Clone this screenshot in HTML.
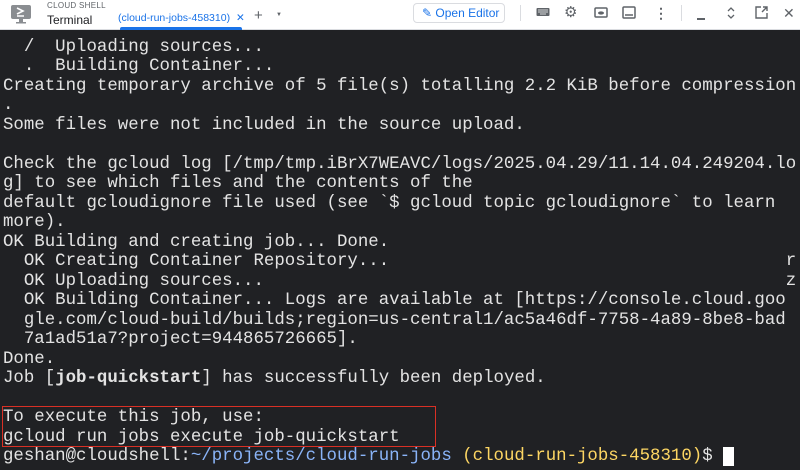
<!DOCTYPE html>
<html><head><meta charset="utf-8"><style>
*{margin:0;padding:0;box-sizing:border-box}
body{width:800px;height:470px;overflow:hidden;background:#202124;font-family:"Liberation Sans",sans-serif;position:relative}
#hdr{position:absolute;left:0;top:0;width:800px;height:30px;background:#fff;border-bottom:1px solid #dadce0}
.t{position:absolute;white-space:nowrap}
pre{position:absolute;left:3px;top:38px;font-family:"Liberation Mono",monospace;font-size:17.4px;line-height:19.48px;color:#e3e3e3;white-space:pre}
.b{color:#8ab4f8}.y{color:#fdd663}
#box{position:absolute;left:2px;top:406px;width:434px;height:41px;border:1.5px solid #d93025}
.ic{position:absolute;top:7px}
</style></head><body>
<div id="hdr">
 <svg class="ic" style="left:10px;top:4px" width="22" height="20" viewBox="0 0 22 20"><rect x="1" y="1" width="20" height="14" rx="2" fill="#8a8d91"/><rect x="9" y="15" width="4" height="3" fill="#8a8d91"/><rect x="6" y="18" width="10" height="1.5" fill="#8a8d91"/><path d="M7 4l6 3-6 3M7 12h7" stroke="#fff" stroke-width="1.6" fill="none"/></svg>
 <div class="t" style="left:47px;top:1px;font-size:8px;color:#5f6368;letter-spacing:.3px">CLOUD SHELL</div>
 <div class="t" style="left:47px;top:13px;font-size:12px;color:#202124">Terminal</div>
 <div class="t" style="left:118px;top:12px;font-size:10.5px;color:#1a73e8">(cloud-run-jobs-458310) <span style="margin-left:3px">✕</span></div>
 <div style="position:absolute;left:120px;top:27px;width:122px;height:3px;background:#1a73e8;border-radius:2px 2px 0 0"></div>
 <div class="t" style="left:254px;top:7px;font-size:15px;color:#5f6368">+</div>
 <div class="t" style="left:276px;top:12px;font-size:6px;color:#5f6368">▼</div>
 <div style="position:absolute;left:413px;top:3px;width:92px;height:20px;border:1px solid #dadce0;border-radius:4px"></div>
 <div class="t" style="left:422px;top:6px;font-size:12px;color:#1a73e8">✎ Open Editor</div>
 <div style="position:absolute;left:520px;top:5px;width:1px;height:16px;background:#dadce0"></div>
 <svg class="ic" style="left:536px" width="14" height="10"><rect x="0.5" y="1" width="13" height="8" rx="1" fill="#5f6368"/><path d="M2 3h10M2 5h10M4 7h6" stroke="#fff" stroke-width=".8"/></svg>
 <div class="t" style="left:564px;top:3px;font-size:15px;color:#5f6368">⚙</div>
 <svg class="ic" style="left:594px" width="14" height="11"><rect x="1" y="1" width="12" height="9" rx="1" stroke="#5f6368" stroke-width="1.5" fill="none"/><ellipse cx="7" cy="6" rx="3" ry="1.6" fill="#5f6368"/></svg>
 <svg class="ic" style="left:622px;top:6px" width="14" height="13"><rect x="1" y="1" width="12" height="11" rx="1" stroke="#5f6368" stroke-width="1.5" fill="none"/><path d="M3 9h8" stroke="#5f6368" stroke-width="1.5"/></svg>
 <div class="t" style="left:654px;top:5px;font-size:14px;color:#5f6368;font-weight:bold">⋮</div>
 <div style="position:absolute;left:681px;top:5px;width:1px;height:16px;background:#dadce0"></div>
 <div style="position:absolute;left:697px;top:18px;width:8px;height:1.5px;background:#5f6368"></div>
 <svg class="ic" style="left:727px;top:7px" width="8" height="12"><path d="M1 4l3-3 3 3M1 8l3 3 3-3" stroke="#5f6368" stroke-width="1.3" fill="none"/></svg>
 <svg class="ic" style="left:755px;top:6px" width="13" height="13"><path d="M6 1H1v11h11V7M7 6l5-5M8 1h4v4" stroke="#5f6368" stroke-width="1.4" fill="none"/></svg>
 <div class="t" style="left:783px;top:5px;font-size:14px;color:#5f6368">✕</div>
</div>
<pre>  /  Uploading sources...
  .  Building Container...
Creating temporary archive of 5 file(s) totalling 2.2 KiB before compression
.
Some files were not included in the source upload.

Check the gcloud log [/tmp/tmp.iBrX7WEAVC/logs/2025.04.29/11.14.04.249204.lo
g] to see which files and the contents of the
default gcloudignore file used (see `$ gcloud topic gcloudignore` to learn
more).
OK Building and creating job... Done.
  OK Creating Container Repository...                                      r
  OK Uploading sources...                                                  z
  OK Building Container... Logs are available at [https://console.cloud.goo
  gle.com/cloud-build/builds;region=us-central1/ac5a46df-7758-4a89-8be8-bad
  7a1ad51a7?project=944865726665].
Done.
Job [<b>job-quickstart</b>] has successfully been deployed.

To execute this job, use:
gcloud run jobs execute job-quickstart
geshan@cloudshell:<span class="b">~/projects/cloud-run-jobs</span> <span class="y">(cloud-run-jobs-458310)</span>$ <span style="background:#fff">&nbsp;</span></pre>
<div id="box"></div>
</body></html>
